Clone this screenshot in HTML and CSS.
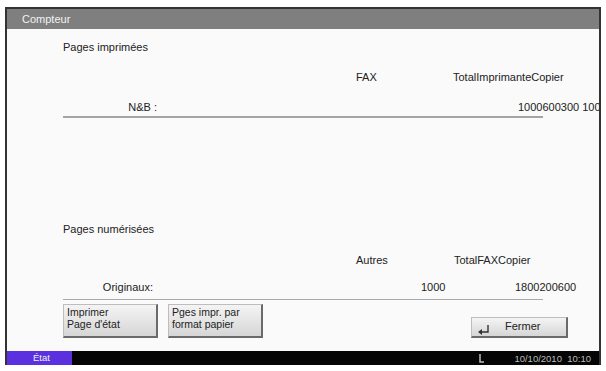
FILE: index.html
```html
<!DOCTYPE html>
<html lang="fr">

<head>
    <meta charset="UTF-8">
    <meta name="viewport" content="width=device-width, initial-scale=1.0">
    <title>Compteur</title>
    <link rel="stylesheet" href="styles.css">
</head>

<body>
    <div class="screen">
        <div class="titlebar">Compteur</div>

        <div class="content">
            <!-- Printed pages -->
            <div class="section printed">
                <h2>Pages imprimées</h2>
                <div class="cols printed-cols">
                    <span></span>
                    <span>FAX</span>
                    <span>TotalImprimanteCopier</span>
                </div>
                <div class="row printed-row">
                    <span class="label">N&amp;B :</span>
                    <span class="value">1000600300 1000</span>
                </div>
                <div class="rule thick"></div>
            </div>

            <!-- Scanned pages -->
            <div class="section scanned">
                <h2>Pages numérisées</h2>
                <div class="cols scanned-cols">
                    <span></span>
                    <span>Autres</span>
                    <span>TotalFAXCopier</span>
                </div>
                <div class="row scanned-row">
                    <span class="label">Originaux:</span>
                    <span class="value other">1000</span>
                    <span class="value">1800200600</span>
                </div>
                <div class="rule"></div>
            </div>

            <div class="buttons">
                <button type="button" class="key">Imprimer<br>Page d'état</button>
                <button type="button" class="key">Pges impr. par<br>format papier</button>
                <button type="button" class="close">
                    <svg width="14" height="12" viewBox="0 0 14 12">
                        <path d="M11 1 V8 H3" fill="none" stroke="#333" stroke-width="1.4"/>
                        <path d="M1 8 L5 5 L5 11 Z" fill="#333"/>
                    </svg>
                    <span>Fermer</span>
                </button>
            </div>
        </div>

        <div class="statusbar">
            <div class="state">État</div>
            <div class="clock">
                <svg width="6" height="10" viewBox="0 0 6 10">
                    <path d="M1 1 V9 H5" fill="none" stroke="#bbb" stroke-width="1.5"/>
                </svg>
                <span>10/10/2010&nbsp;&nbsp;10:10</span>
            </div>
        </div>
    </div>
</body>

</html>
```

FILE: styles.css
```css
* {
    box-sizing: border-box;
}

body {
    font-family: "Liberation Sans", Arial, sans-serif;
    font-size: 11px;
    color: #222;
    background-color: white;
    margin: 0;
    padding: 7px 5px 6px 5px;
}

.screen {
    width: 596px;
    height: 358px;
    border: 2px solid #333;
    border-bottom: none;
    display: flex;
    flex-direction: column;
    overflow: hidden;
}

.titlebar {
    height: 20px;
    line-height: 20px;
    background-color: #7f7f7f;
    color: #f2f2f2;
    padding-left: 15px;
}

.content {
    flex: 1;
    background-color: #fafafa;
    padding: 11px 31px 0 56px;
    overflow: hidden;
}

h2 {
    font-size: 11px;
    font-weight: normal;
    line-height: 14px;
    margin: 0;
}

.cols,
.row {
    display: grid;
    line-height: 14px;
    white-space: nowrap;
}

/* Printed pages */
.printed-cols {
    grid-template-columns: 293px 97px 1fr;
    margin-top: 16px;
}

.printed-row {
    grid-template-columns: 94px 1fr;
    margin-top: 16px;
}

.printed-row .value {
    padding-left: 361px;
}

.label {
    text-align: right;
}

.rule {
    width: 480px;
    height: 1px;
    background-color: #aaa;
}

.rule.thick {
    height: 2px;
    margin-top: 2px;
    background-color: #a4a4a4;
}

/* Scanned pages */
.scanned {
    margin-top: 104px;
}

.scanned-cols {
    grid-template-columns: 293px 98px 1fr;
    margin-top: 17px;
}

.scanned-row {
    grid-template-columns: 90px 362px 1fr;
    margin-top: 13px;
}

.scanned-row .other {
    padding-left: 268px;
}

.scanned .rule {
    margin-top: 5px;
}

/* Buttons */
.buttons {
    display: flex;
    align-items: flex-end;
    gap: 10px;
    margin-top: 4px;
}

.buttons button {
    font-family: "Liberation Sans", Arial, sans-serif;
    color: #222;
    background: linear-gradient(#f4f4f4, #d6d6d6);
    border-style: solid;
    border-width: 1px 2px 2px 1px;
    border-color: #bdbdbd #6a6a6a #6a6a6a #bdbdbd;
    cursor: pointer;
}

.key {
    width: 95px;
    height: 34px;
    font-size: 10.5px;
    line-height: 12px;
    text-align: left;
    padding: 1px 3px 0 3px;
    display: flex;
    align-items: flex-start;
}

.close {
    margin-left: auto;
    width: 97px;
    height: 21px;
    font-size: 11px;
    display: flex;
    align-items: center;
    padding: 0 0 0 5px;
}

.close svg {
    margin-top: 5px;
}

.close span {
    margin-left: 14px;
    margin-top: -3px;
}

/* Status bar */
.statusbar {
    height: 14px;
    background-color: #050505;
    display: flex;
    align-items: center;
    font-size: 9.5px;
}

.state {
    width: 65px;
    height: 100%;
    background-color: #5b30de;
    color: #f0f0f0;
    line-height: 14px;
    padding-left: 26px;
}

.clock {
    margin-left: auto;
    display: flex;
    align-items: center;
    color: #bcbcbc;
    padding-right: 8px;
}

.clock svg {
    margin-right: 29px;
}
```
